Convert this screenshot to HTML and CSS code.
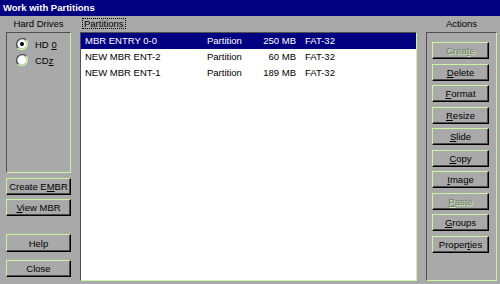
FILE: index.html
```html
<!doctype html>
<html>
<head>
<meta charset="UTF-8">
<title>Work with Partitions</title>
<link rel="stylesheet" href="styles.css">
</head>
<body>
<div class="window">
	<div class="titlebar">Work with Partitions</div>

	<div class="main">
		<div class="col_left">
			<div class="caption">Hard Drives</div>
			<div class="group drives">
				<label class="radio">
					<svg width="12" height="12" viewBox="0 0 12 12">
						<path d="M10.2 1.8A6 6 0 0 0 1.8 10.2" fill="none" stroke="#505050" stroke-width="1.4"/>
						<path d="M10.2 1.8A6 6 0 0 1 1.8 10.2" fill="none" stroke="#c8f4a4" stroke-width="1.4"/>
						<circle cx="6" cy="6" r="4.4" fill="#fff"/>
						<circle cx="6" cy="6" r="2" fill="#000"/>
					</svg>
					<span>HD <u>0</u></span>
				</label>
				<label class="radio">
					<svg width="12" height="12" viewBox="0 0 12 12">
						<path d="M10.2 1.8A6 6 0 0 0 1.8 10.2" fill="none" stroke="#505050" stroke-width="1.4"/>
						<path d="M10.2 1.8A6 6 0 0 1 1.8 10.2" fill="none" stroke="#c8f4a4" stroke-width="1.4"/>
						<circle cx="6" cy="6" r="4.4" fill="#fff"/>
					</svg>
					<span>CD<u>z</u></span>
				</label>
			</div>
			<button type="button" class="btn btn_embr">Create E<u>M</u>BR</button>
			<button type="button" class="btn btn_view"><u>V</u>iew MBR</button>
			<button type="button" class="btn btn_help">Help</button>
			<button type="button" class="btn btn_close">Close</button>
		</div>

		<div class="col_center">
			<div class="caption caption_left"><span class="focus">Partitions</span></div>
			<ul class="list">
				<li class="row selected">
					<span>MBR ENTRY 0-0</span><span>Partition</span><span class="size">250 MB</span><span class="fs">FAT-32</span>
				</li>
				<li class="row">
					<span>NEW MBR ENT-2</span><span>Partition</span><span class="size">60 MB</span><span class="fs">FAT-32</span>
				</li>
				<li class="row">
					<span>NEW MBR ENT-1</span><span>Partition</span><span class="size">189 MB</span><span class="fs">FAT-32</span>
				</li>
			</ul>
		</div>

		<div class="col_right">
			<div class="caption">Actions</div>
			<div class="group actions">
				<button type="button" class="btn disabled">Crea<u>t</u>e</button>
				<button type="button" class="btn"><u>D</u>elete</button>
				<button type="button" class="btn"><u>F</u>ormat</button>
				<button type="button" class="btn"><u>R</u>esize</button>
				<button type="button" class="btn"><u>S</u>lide</button>
				<button type="button" class="btn"><u>C</u>opy</button>
				<button type="button" class="btn"><u>I</u>mage</button>
				<button type="button" class="btn disabled"><u>P</u>aste</button>
				<button type="button" class="btn"><u>G</u>roups</button>
				<button type="button" class="btn">Proper<u>t</u>ies</button>
			</div>
		</div>
	</div>
</div>
</body>
</html>
```

FILE: styles.css
```css
body {
	margin: 0;
	background: #a9a9a9;
	font-family: "Liberation Sans", Arial, sans-serif;
	font-size: 9.5px;
	color: #000;
}
.window {
	width: 500px;
	height: 284px;
	overflow: hidden;
}
.titlebar {
	height: 16px;
	line-height: 15px;
	padding-left: 3px;
	background: #000080;
	color: #fff;
	font-weight: bold;
	font-size: 9.5px;
}
.main {
	display: flex;
	padding-left: 6px;
}
.caption {
	height: 16px;
	line-height: 16px;
	text-align: center;
}
.caption_left {
	text-align: left;
}
.focus {
	display: inline-block;
	margin: 2px 0 0 2px;
	padding: 0 1px;
	line-height: 9px;
	border: 1px dotted #000;
}

/* 안쪽으로 들어간 박스 */
.group, .list {
	box-sizing: border-box;
	border: 1px solid #505050;
	border-right-color: #c8f4a4;
	border-bottom-color: #c8f4a4;
}

.col_left {
	width: 65px;
	display: flex;
	flex-direction: column;
}
.drives {
	height: 141px;
	padding: 3px 0 0 9px;
}
.radio {
	display: flex;
	align-items: center;
	height: 16px;
}
.radio svg {
	margin-right: 7px;
}

.btn {
	box-sizing: border-box;
	display: block;
	height: 17px;
	padding: 0;
	font-family: inherit;
	font-size: 9.5px;
	color: #000;
	background: #a9a9a9;
	border: 1px solid #c8f4a4;
	border-right-color: #000;
	border-bottom-color: #000;
	box-shadow: inset -1px -1px 0 #4a4a4a;
	text-align: center;
}
.btn.disabled {
	color: #7a7a7a;
	text-shadow: 1px 1px 0 #c8f4a4;
}
.col_left .btn {
	width: 65px;
}
.btn_embr {
	margin-top: 5px;
}
.btn_view {
	margin-top: 4px;
}
.btn_help {
	margin-top: 18px;
	height: 18px;
}
.btn_close {
	margin-top: 8px;
}

.col_center {
	width: 337px;
	margin-left: 9px;
}
.list {
	list-style: none;
	margin: 0;
	height: 249px;
	padding: 0;
	background: #fff;
}
.row {
	display: grid;
	grid-template-columns: 126px 49px 40px 1fr;
	height: 16px;
	line-height: 16px;
}
.row span:first-child {
	padding-left: 4px;
}
.row .size {
	text-align: right;
}
.row .fs {
	padding-left: 9px;
}
.selected {
	background: #000080;
	color: #fff;
}

.col_right {
	width: 71px;
	margin-left: 9px;
}
.actions {
	height: 249px;
	padding: 9px 0 0 5px;
	display: flex;
	flex-direction: column;
	gap: 4.5px;
}
.actions .btn {
	width: 57px;
}
```
